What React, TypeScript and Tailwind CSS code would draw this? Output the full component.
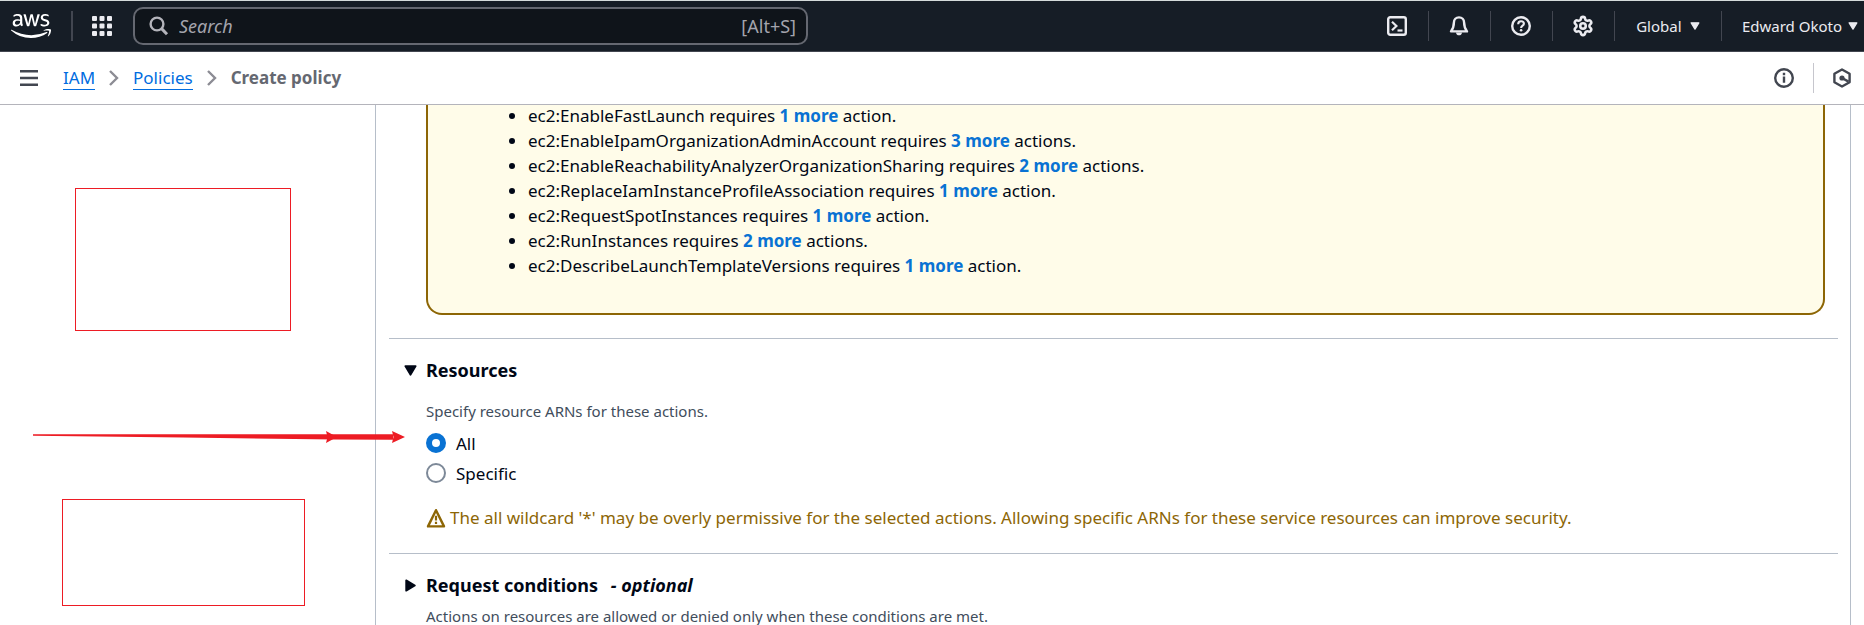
import { useState, type ReactNode } from "react";
import { FaAws } from "react-icons/fa";
import { Settings } from "lucide-react";

const requirements = [
  { action: "ec2:EnableFastLaunch", count: 1 },
  { action: "ec2:EnableIpamOrganizationAdminAccount", count: 3 },
  { action: "ec2:EnableReachabilityAnalyzerOrganizationSharing", count: 2 },
  { action: "ec2:ReplaceIamInstanceProfileAssociation", count: 1 },
  { action: "ec2:RequestSpotInstances", count: 1 },
  { action: "ec2:RunInstances", count: 2 },
  { action: "ec2:DescribeLaunchTemplateVersions", count: 1 },
];

function Icon({ children, className = "size-5" }: { children: ReactNode; className?: string }) {
  return (
    <svg
      viewBox="0 0 20 20"
      className={className}
      fill="none"
      stroke="currentColor"
      strokeWidth="2.4"
      aria-hidden="true"
    >
      {children}
    </svg>
  );
}

function Caret({ className = "" }: { className?: string }) {
  return (
    <svg viewBox="0 0 12 10" className={className} aria-hidden="true">
      <path d="M1.2 1h9.6L6 9z" fill="currentColor" stroke="currentColor" strokeWidth="1.6" strokeLinejoin="round" />
    </svg>
  );
}

function NavDivider() {
  return <span className="h-[30px] w-px shrink-0 bg-[#424650]" />;
}

function NavButton({ label, children }: { label: string; children: ReactNode }) {
  return (
    <button type="button" aria-label={label} className="flex h-10 w-[61px] items-center justify-center">
      {children}
    </button>
  );
}

function TopNav() {
  return (
    <header className="flex h-[52px] shrink-0 items-center border-t border-b border-t-[#d5dbdb] border-b-[#424650] bg-[#161d26] text-[#ebebf0]">
      <a href="#" aria-label="AWS home" className="ml-[11px] text-white">
        <FaAws className="h-8 w-10" />
      </a>
      <span className="ml-5 h-[30px] w-0.5 shrink-0 bg-[#424650]" />
      <button type="button" aria-label="Services" className="ml-[19px]">
        <svg viewBox="0 0 20 20" className="size-5" fill="currentColor" aria-hidden="true">
          {[0, 7.5, 15].map((y) =>
            [0, 7.5, 15].map((x) => <rect key={`${x}-${y}`} x={x} y={y} width="5" height="5" rx="1" />),
          )}
        </svg>
      </button>
      <label className="ml-[21px] flex h-[38px] w-[675px] items-center rounded-[10px] border-2 border-[#656871] bg-[#0f141a] pr-2.5 pl-3.5 text-lg text-[#b4b4bb]">
        <Icon className="size-5">
          <circle cx="8" cy="8" r="6.4" />
          <path d="M12.6 12.6l5.4 5.6" strokeWidth="3" />
        </Icon>
        <input
          type="text"
          aria-label="Search"
          placeholder="Search"
          className="ml-2.5 min-w-0 flex-1 bg-transparent italic outline-none placeholder:text-[#a4a4ad]"
        />
        <span className="text-[#a4a4ad]">[Alt+S]</span>
      </label>
      <nav className="ml-auto flex items-center text-[15px]">
        <NavButton label="CloudShell">
          <Icon>
            <rect x="1.2" y="1.2" width="17.6" height="17.6" rx="2" />
            <path d="M5 5.8l4.4 4.2L5 14.2" strokeWidth="2.2" />
            <path d="M10.5 14.5h5" strokeWidth="2.2" />
          </Icon>
        </NavButton>
        <NavDivider />
        <NavButton label="Notifications">
          <Icon>
            <path d="M10 1.4c-3 0-5.1 2.2-5.1 5.2 0 4.4-1.2 6.6-2.9 8.8h16c-1.7-2.2-2.9-4.4-2.9-8.8 0-3-2.1-5.2-5.1-5.2z" strokeLinejoin="round" />
            <path d="M7 16.5c.3 3.8 5.7 3.8 6 0z" fill="currentColor" stroke="none" />
          </Icon>
        </NavButton>
        <NavDivider />
        <NavButton label="Support">
          <Icon>
            <circle cx="10" cy="10" r="8.8" />
            <path d="M7.2 8.2c0-4 5.7-3.6 5.7-.4 0 1.9-2.8 1.9-2.8 4.2" strokeWidth="2.1" />
            <circle cx="10.1" cy="14.3" r="1.3" fill="currentColor" stroke="none" />
          </Icon>
        </NavButton>
        <NavDivider />
        <NavButton label="Settings">
          <Settings className="size-[22px]" strokeWidth={2.8} aria-hidden="true" />
        </NavButton>
        <NavDivider />
        <button type="button" className="flex h-10 w-[106px] items-center justify-center gap-2">
          Global
          <Caret className="h-2 w-2.5" />
        </button>
        <NavDivider />
        <button type="button" className="flex h-10 items-center gap-1.5 pr-1.5 pl-5">
          Edward Okoto
          <Caret className="h-2 w-2.5" />
        </button>
      </nav>
    </header>
  );
}

function Chevron() {
  return (
    <svg viewBox="0 0 10 16" className="h-4 w-2.5" fill="none" stroke="#8c8c94" strokeWidth="2.4" aria-hidden="true">
      <path d="M1 1l7 7-7 7" />
    </svg>
  );
}

function BreadcrumbBar() {
  return (
    <div className="flex h-[53px] shrink-0 items-center border-b border-[#b4b4bb] bg-white text-[#424650]">
      <button type="button" aria-label="Open navigation" className="ml-5">
        <svg viewBox="0 0 18 16" className="h-4 w-[18px]" fill="currentColor" aria-hidden="true">
          <path d="M0 0h18v2.4H0zM0 6.8h18v2.4H0zM0 13.6h18V16H0z" />
        </svg>
      </button>
      <nav aria-label="Breadcrumb" className="ml-[25px] flex items-center gap-3.5 text-[17px] leading-[22px]">
        <a href="#" className="border-b border-[#006ce0] text-[#006ce0]">
          IAM
        </a>
        <Chevron />
        <a href="#" className="border-b border-[#006ce0] text-[#006ce0]">
          Policies
        </a>
        <Chevron />
        <span className="font-bold text-[#656871]">Create policy</span>
      </nav>
      <div className="ml-auto flex items-center">
        <button type="button" aria-label="Info">
          <Icon>
            <circle cx="10" cy="10" r="8.8" />
            <path d="M10 8.6v6.2M10 4.8v2.4" />
          </Icon>
        </button>
        <span className="ml-[19px] h-[30px] w-px bg-[#c6c6cd]" />
        <button type="button" aria-label="Amazon Q" className="mr-3 ml-[18px]">
          <Icon>
            <path d="M10 1.5l7.6 4.2v8.6L10 18.5l-7.6-4.2V5.7z" strokeLinejoin="round" />
            <circle cx="10" cy="10" r="2.6" fill="currentColor" stroke="none" />
            <path d="M10 10l6.5 3.6" />
          </Icon>
        </button>
      </div>
    </div>
  );
}

function RadioOption({ label, checked, onSelect }: { label: string; checked: boolean; onSelect: () => void }) {
  return (
    <label className="flex h-[30px] items-center gap-2.5">
      <input
        type="radio"
        name="resource-scope"
        checked={checked}
        onChange={onSelect}
        className="size-5 appearance-none rounded-full border-2 border-[#7d8998] bg-white checked:border-[6px] checked:border-[#0972d3]"
      />
      {label}
    </label>
  );
}

function RequirementsAlert() {
  return (
    <div className="mr-[13px] ml-[37px] rounded-b-2xl border-2 border-t-0 border-[#8d6605] bg-[#fffce9] pb-[35px]">
      <ul className="-mt-0.5 list-disc pl-[100px]">
        {requirements.map(({ action, count }) => (
          <li key={action}>
            {action} requires{" "}
            <a href="#" className="font-bold text-[#0972d3]">
              {count} more
            </a>{" "}
            {count === 1 ? "action." : "actions."}
          </li>
        ))}
      </ul>
    </div>
  );
}

function PolicyEditor() {
  const [scope, setScope] = useState("all");
  return (
    <main className="mr-[13px] min-w-0 flex-1 border-x border-[#b6bec9] pr-3 pl-[13px] text-[17px] leading-[25px] text-[#000716]">
      <RequirementsAlert />
      <section className="mt-[23px] border-t border-[#b6bec9] pt-[18px] pl-[37px]">
        <h2 className="-ml-[22px] text-lg leading-[27px] font-bold">
          <button type="button" aria-expanded="true" className="flex items-center gap-[9px]">
            <Caret className="h-[11px] w-[13px]" />
            Resources
          </button>
        </h2>
        <p className="mt-4 text-[15px] leading-[22px] text-[#414d5c]" id="scope-hint">
          Specify resource ARNs for these actions.
        </p>
        <div role="radiogroup" aria-labelledby="scope-hint" className="mt-1.5">
          <RadioOption label="All" checked={scope === "all"} onSelect={() => setScope("all")} />
          <RadioOption label="Specific" checked={scope === "specific"} onSelect={() => setScope("specific")} />
        </div>
        <p className="mt-[17px] flex items-center gap-1 text-[#8d6605]">
          <svg viewBox="0 0 20 20" className="size-5 shrink-0" fill="none" stroke="currentColor" strokeWidth="2.4" aria-hidden="true">
            <path d="M10 2.2l8 16.2H2z" strokeLinejoin="round" />
            <path d="M10 7.8v4.8M10 13.8v2.2" strokeWidth="2.2" />
          </svg>
          The all wildcard '*' may be overly permissive for the selected actions. Allowing specific ARNs for these
          service resources can improve security.
        </p>
      </section>
      <section className="mt-[23px] border-t border-[#b6bec9] pt-[18px] pl-[37px]">
        <h2 className="-ml-[22px] text-lg leading-[27px] font-bold">
          <button type="button" aria-expanded="false" className="flex items-center gap-[9px]">
            <Caret className="h-[11px] w-[13px] -rotate-90" />
            <span>
              Request conditions <em className="ml-2">- optional</em>
            </span>
          </button>
        </h2>
        <p className="mt-1.5 text-[15px] leading-[22px] text-[#414d5c]">
          Actions on resources are allowed or denied only when these conditions are met.
        </p>
      </section>
    </main>
  );
}

/* Markup drawn over the page: two outlined boxes and a tapering pointer. */
function Annotations() {
  return (
    <>
      <div className="pointer-events-none absolute top-[83px] left-[75px] h-[143px] w-[216px] border border-[#ed1c24]" />
      <div className="pointer-events-none absolute top-[394px] left-[62px] h-[107px] w-[243px] border border-[#ed1c24]" />
      <svg
        viewBox="0 0 372 14"
        className="pointer-events-none absolute top-[325px] left-[33px] h-3.5 w-[372px]"
        fill="#ed1c24"
        aria-hidden="true"
      >
        <path d="M0 4.2L360 4.2V9.7L302 9.6L150 7.6L0 5.8z" />
        <path d="M293 1l11 6-11 6 1.5-6z" />
        <path d="M359 1l13 6-13 6 1.5-6z" />
      </svg>
    </>
  );
}

export default function App() {
  return (
    <div className="flex h-screen flex-col overflow-hidden bg-white font-['Noto_Sans',sans-serif]">
      <TopNav />
      <BreadcrumbBar />
      <div className="relative flex min-h-0 flex-1 overflow-hidden">
        <aside className="w-[375px] shrink-0" />
        <PolicyEditor />
        <Annotations />
      </div>
    </div>
  );
}
